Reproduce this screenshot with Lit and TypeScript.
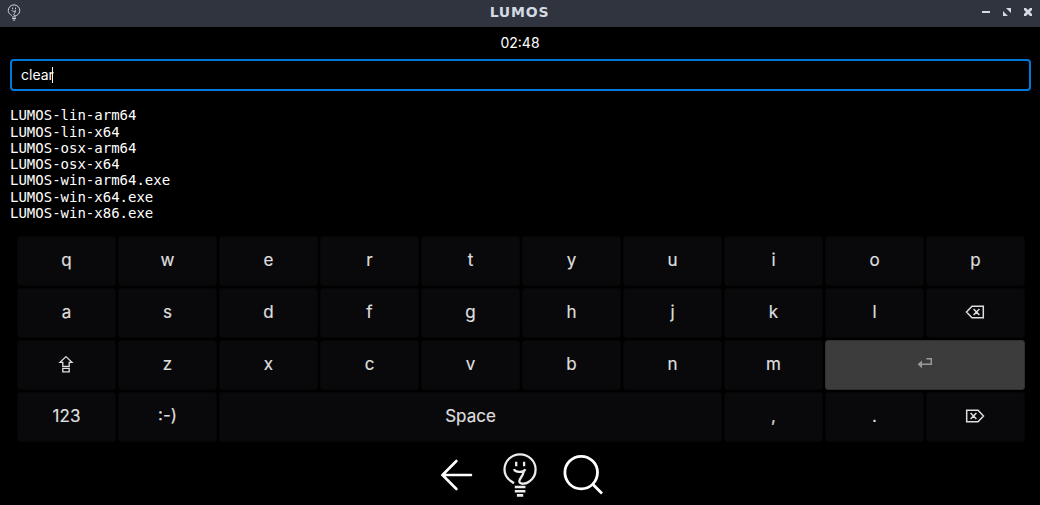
import { LitElement, html, css, svg, TemplateResult } from "lit";
import { customElement, property, state } from "lit/decorators.js";

const bulb = svg`
  <path d="M12 31.3L8.5 28.8C4.8 26 2.5 22.2 2.5 17.5C2.5 9 9.4 2.4 18 2.4S33.6 9 33.6 17.5c0 5.6-3 10-7 12.5C24 31.8 18 33 17.3 29.4C17 26.6 20.8 25 21.8 19.4"/>
  <path d="M14.2 9.8v4.4M22.1 9.8v4.4M12 17.2c1 3.2 9.4 4 11.4 0"/>
  <path d="M12.8 35h10.6M12.8 39.2h10.6M14.9 43.4h6.3" stroke-width="2.6" stroke-linecap="butt"/>`;

const icons: Record<string, TemplateResult> = {
  shift: html`<svg width="16" height="18" viewBox="0 0 16 18"><path d="M8 1.6L14 7.3H11.2V11.3H4.8V7.3H2ZM4.8 13.3H11.2V16.9H4.8Z"/></svg>`,
  backspace: html`<svg width="20" height="14" viewBox="0 0 20 14"><path d="M1.5 7L7 1.3H18.3V12.7H7ZM8.6 3.9L14.4 10.1M14.4 3.9L8.6 10.1"/></svg>`,
  del: html`<svg width="20" height="14" viewBox="0 0 20 14"><path d="M18.5 7L13 1.3H1.7V12.7H13ZM5.6 3.9L11.4 10.1M11.4 3.9L5.6 10.1"/></svg>`,
  enter: html`<svg width="16" height="12" viewBox="0 0 16 12"><path d="M9.4 1.7H14.3V7.3H4"/><path class="solid" d="M.6 7.3L5 3.4V11.2Z"/></svg>`,
};

@customElement("lumos-key")
class LumosKey extends LitElement {
  @property() label = "";
  @property() icon = "";
  static styles = css`
    :host { display: flex; align-items: center; justify-content: center; box-sizing: border-box;
      border-radius: 3px; background: #09090b; border: 1px solid #060607; color: #dedede;
      font: 400 17px/22px Inter, sans-serif; padding-bottom: 2px; }
    :host([active]) { background: #3c3c3c; border-color: #303030; color: #999; }
    svg { display: block; fill: none; stroke: currentColor; stroke-width: 1.5; }
    .solid { fill: currentColor; stroke: none; }
    .enter { margin: 0 1px 2px 0; }
    .backspace, .del, .shift { margin-right: 1px; }
    .shift svg { stroke-width: 1.3; }
    span { -webkit-text-stroke: .2px currentColor; }
  `;
  render() {
    return this.icon
      ? html`<span class=${this.icon}>${icons[this.icon]}</span>`
      : html`<span>${this.label}</span>`;
  }
}

@customElement("app-root")
class AppRoot extends LitElement {
  @state() command = "clear";
  @state() files = ["LUMOS-lin-arm64", "LUMOS-lin-x64", "LUMOS-osx-arm64", "LUMOS-osx-x64",
    "LUMOS-win-arm64.exe", "LUMOS-win-x64.exe", "LUMOS-win-x86.exe"];
  static styles = css`
    :host { display: flex; flex-direction: column; width: 100%; height: 505px; box-sizing: border-box;
      overflow: hidden; background: #000; color: #fff; font-family: Inter, sans-serif; }
    svg { display: block; fill: none; stroke: currentColor; }
    .titlebar { height: 27px; flex: none; box-sizing: border-box; background: #2f343f; color: #d3dae3;
      display: grid; grid-template-columns: 1fr auto 1fr; align-items: center; padding: 0 8px 3px 7px; }
    .titlebar h1 { margin: 0; font: bold 14px/16px "DejaVu Sans", sans-serif; letter-spacing: .8px; }
    .controls { display: flex; justify-content: flex-end; align-items: center; gap: 13px; }
    .controls svg { fill: currentColor; stroke: none; }
    .clock { text-align: center; font-size: 14px; line-height: 18px; height: 32px; padding-top: 7px; box-sizing: border-box; flex: none; }
    .entry { margin: 0 9px 0 10px; height: 32px; flex: none; box-sizing: border-box; border: 2px solid #0078d7;
      border-radius: 4px; padding: 0 9px 1px; display: flex; align-items: center; font-size: 14px; }
    .caret { width: 1px; height: 16px; background: #fff; margin-left: -2px; }
    .files { margin: 16.25px 10px 0; height: 128.25px; flex: none; font: 14px/16.3px "DejaVu Sans Mono", monospace; }
    .keyboard { margin: 0 15px 0 17px; flex: none; display: grid; grid-template-columns: repeat(10, 1fr);
      grid-auto-rows: 50px; gap: 2px; }
    .wide { grid-column: span 2; }
    .space { grid-column: span 5; }
    .nav { flex: 1; min-height: 0; padding: 4px 0 0 3px; display: flex; justify-content: center; align-items: center; gap: 26px; }
    .nav .bulb { margin: 0 -1px 0 1px; }
  `;
  key(k: string) {
    const icon = k in icons ? k : "";
    const cls = k === "enter" ? "wide" : k === "Space" ? "space" : "";
    return html`<lumos-key class=${cls} .label=${k} .icon=${icon} ?active=${k === "enter"}></lumos-key>`;
  }
  render() {
    const keys = [..."qwertyuiopasdfghjkl", "backspace", "shift", ..."zxcvbnm", "enter", "123", ":-)", "Space", ",", ".", "del"];
    return html`
      <div class="titlebar">
        <svg width="14" height="17" viewBox="0 0 36 46" stroke-width="2.6">${bulb}</svg>
        <h1>LUMOS</h1>
        <div class="controls">
          <svg width="8" height="8" viewBox="0 0 8 8"><path d="M0 3h8v2H0z"/></svg>
          <svg width="8" height="8" viewBox="0 0 8 8"><path d="M3 0H8V5ZM0 3V8H5Z"/></svg>
          <svg width="8" height="8" viewBox="0 0 8 8"><path d="M0 0H2L4 2L6 0H8V2L6 4L8 6V8H6L4 6L2 8H0V6L2 4L0 2Z"/></svg>
        </div>
      </div>
      <div class="clock">02:48</div>
      <div class="entry"><span>${this.command}</span><span class="caret"></span></div>
      <div class="files">${this.files.map((f) => html`<div>${f}</div>`)}</div>
      <div class="keyboard">${keys.map((k) => this.key(k))}</div>
      <div class="nav">
        <svg width="36" height="36" viewBox="0 0 36 36" stroke-width="2.6" stroke-linecap="round"><path d="M32 18H3.4M17.4 4L3.4 18L17.4 32"/></svg>
        <svg class="bulb" width="36" height="46" viewBox="0 0 36 46" stroke-width="2.3" color="#ececec">${bulb}</svg>
        <svg width="42" height="42" viewBox="0 0 42 42" stroke-width="2.8"><circle cx="18.2" cy="18.6" r="16.3"/><path d="M30 30.5L39 39.5"/></svg>
      </div>`;
  }
}
